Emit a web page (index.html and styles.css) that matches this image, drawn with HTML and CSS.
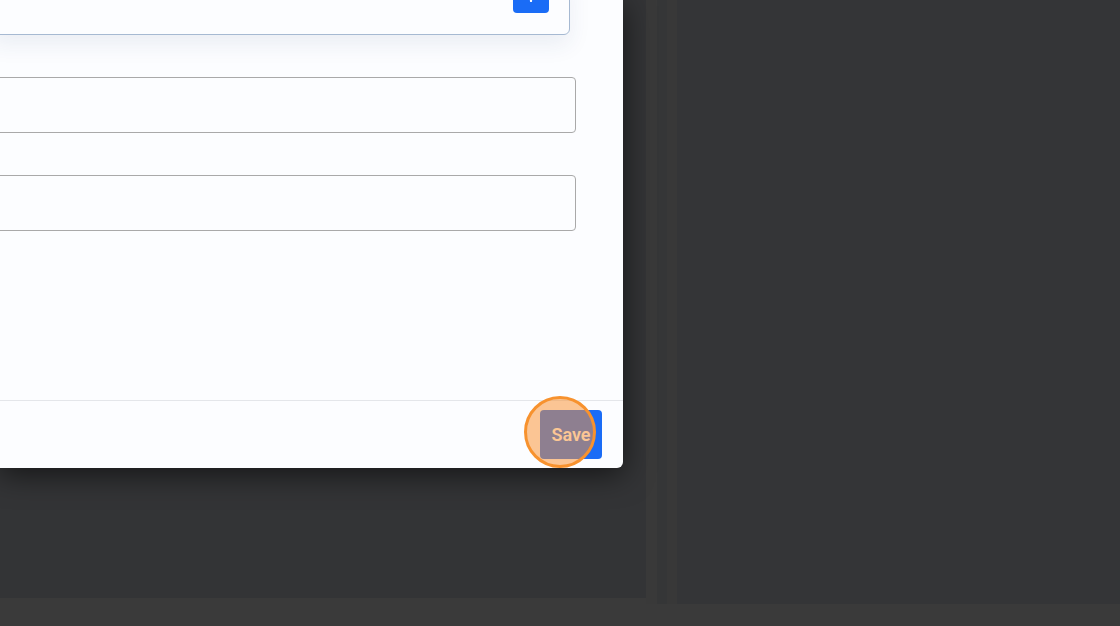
FILE: index.html
```html
<!DOCTYPE html>
<html lang="en">
<head>
  <meta charset="UTF-8">
  <title>Edit</title>
  <link rel="stylesheet" href="styles.css">
</head>
<body>
<div class="backdrop">
  <div class="main-col"></div>
  <div class="gutter gutter-a"></div>
  <div class="gutter gutter-b"></div>
  <div class="gutter gutter-c"></div>
  <div class="side-panel"></div>
</div>

<div class="modal">
  <div class="modal-body">
    <div class="card">
      <button class="icon-btn" type="button">
        <svg width="14" height="14" viewBox="0 0 14 14"><path d="M7 1v12M1 7h12" stroke="#fff" stroke-width="2.2" stroke-linecap="round"/></svg>
      </button>
    </div>
    <input class="field" type="text">
    <input class="field" type="text">
  </div>
  <div class="modal-footer">
    <button class="save-btn" type="button">Save</button>
    <span class="click-marker"></span>
  </div>
</div>
</body>
</html>
```

FILE: styles.css
```css
body {
  margin: 0;
  height: 626px;
  overflow: hidden;
  background: #3a3a3a;
  font-family: Roboto, "Liberation Sans", sans-serif;
  position: relative;
}

.backdrop {
  display: flex;
  height: 604px;
}

.main-col {
  width: 646px;
  height: 598px;
  background: #333436;
}

.gutter {
  width: 10px;
}

.gutter-a { width: 11px; background: #393939; }
.gutter-b { background: #353637; }
.gutter-c { background: #383838; }

.side-panel {
  flex: 1;
  background: #343537;
}

/* dialog sits over the page */
.modal {
  position: absolute;
  left: 0;
  top: 0;
  width: 623px;
  height: 468px;
  background: #fcfdff;
  border-bottom-right-radius: 6px;
  box-shadow: 0 6px 30px rgba(0, 0, 0, 0.6);
  display: flex;
  flex-direction: column;
}

.modal-body {
  height: 400px;
  margin-left: -10px;
  padding-right: 47px;
  display: flex;
  flex-direction: column;
  gap: 42px;
}

.card {
  box-sizing: border-box;
  height: 60px;
  margin-top: -25px;
  margin-right: 6px;
  border: 1px solid #a6b9d2;
  border-radius: 6px;
  box-shadow: 0 10px 22px rgba(40, 70, 120, 0.08);
  display: flex;
  justify-content: flex-end;
  align-items: flex-end;
  padding: 0 20px 21px 0;
}

.icon-btn {
  width: 36px;
  height: 36px;
  border: none;
  border-radius: 4px;
  background: #1a6cf6;
  display: flex;
  align-items: center;
  justify-content: center;
  padding: 0;
}

.field {
  height: 56px;
  box-sizing: border-box;
  border: 1px solid #a9a9a9;
  border-radius: 4px;
  background: #fcfdff;
  margin: 0;
}

.modal-footer {
  flex: 1;
  border-top: 1px solid #e4e6ea;
  display: flex;
  justify-content: flex-end;
  align-items: flex-start;
  padding: 9px 21px 0 0;
  position: relative;
}

.save-btn {
  width: 62px;
  height: 49px;
  border: none;
  border-radius: 4px;
  background: #1a6cf6;
  color: #fff;
  font-family: Roboto, "Liberation Sans", sans-serif;
  font-size: 18px;
  font-weight: 600;
  padding: 0;
}

.click-marker {
  position: absolute;
  left: 524px;
  top: -5px;
  width: 66px;
  height: 66px;
  border: 3px solid #f7922e;
  border-radius: 50%;
  background: rgba(250, 145, 50, 0.52);
}
```
